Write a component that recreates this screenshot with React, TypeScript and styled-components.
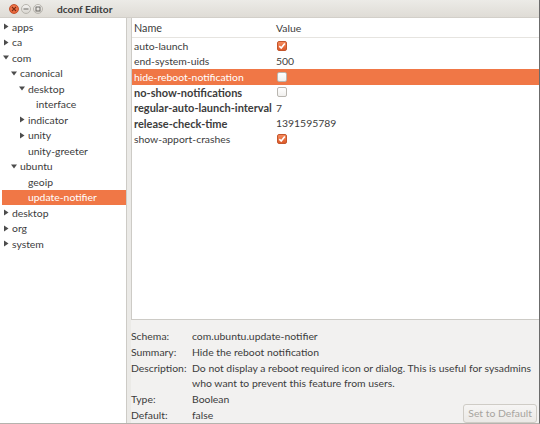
import styled, { createGlobalStyle } from "styled-components";

const GlobalStyle = createGlobalStyle`
  html, body {
    margin: 0;
    padding: 0;
    background: #f2f1f0;
  }
  body {
    font-family: Lato, "Liberation Sans", sans-serif;
    font-size: 10.4px;
    color: #3c3c3c;
  }
`;

interface TreeNode {
  name: string;
  level: number;
  arrow?: "open" | "closed";
  selected?: boolean;
}

const tree: TreeNode[] = [
  { name: "apps", level: 0, arrow: "closed" },
  { name: "ca", level: 0, arrow: "closed" },
  { name: "com", level: 0, arrow: "open" },
  { name: "canonical", level: 1, arrow: "open" },
  { name: "desktop", level: 2, arrow: "open" },
  { name: "interface", level: 3 },
  { name: "indicator", level: 2, arrow: "closed" },
  { name: "unity", level: 2, arrow: "closed" },
  { name: "unity-greeter", level: 2 },
  { name: "ubuntu", level: 1, arrow: "open" },
  { name: "geoip", level: 2 },
  { name: "update-notifier", level: 2, selected: true },
  { name: "desktop", level: 0, arrow: "closed" },
  { name: "org", level: 0, arrow: "closed" },
  { name: "system", level: 0, arrow: "closed" },
];

interface KeyRow {
  name: string;
  value: string | boolean;
  bold?: boolean;
  selected?: boolean;
}

const keys: KeyRow[] = [
  { name: "auto-launch", value: true },
  { name: "end-system-uids", value: "500" },
  { name: "hide-reboot-notification", value: false, selected: true },
  { name: "no-show-notifications", value: false, bold: true },
  { name: "regular-auto-launch-interval", value: "7", bold: true },
  { name: "release-check-time", value: "1391595789", bold: true },
  { name: "show-apport-crashes", value: true },
];

const Window = styled.div`
  width: 540px;
  height: 424px;
  display: flex;
  flex-direction: column;
  background: #f2f1f0;
  box-sizing: border-box;
  border-right: 1px solid #6b6b6b;
  border-bottom: 1px solid #b5b3ae;
  overflow: hidden;
`;

const TitleBar = styled.div`
  height: 18px;
  flex: none;
  display: flex;
  align-items: center;
  padding-left: 9px;
  gap: 2px;
  background: linear-gradient(#ecebe7, #dfdcd6);
  border-bottom: 1px solid #d2cfc9;
  box-sizing: border-box;
`;

const WinButton = styled.div<{ $close?: boolean }>`
  width: 10px;
  height: 10px;
  border-radius: 50%;
  display: flex;
  align-items: center;
  justify-content: center;
  box-sizing: border-box;
  background: ${(p) =>
    p.$close
      ? "radial-gradient(circle at 50% 40%, #f88a5e, #e2542a)"
      : "linear-gradient(#f4f3f1, #d9d6d0)"};
  border: 1px solid ${(p) => (p.$close ? "#c2512c" : "#b8b5ae")};
  svg {
    display: block;
  }
`;

const Title = styled.div`
  margin-left: 12px;
  font-weight: bold;
  font-size: 10.2px;
  color: #3c3c3c;
`;

const Body = styled.div`
  flex: 1;
  display: flex;
  min-height: 0;
`;

const TreePane = styled.div`
  width: 127px;
  flex: none;
  background: #fff;
  border-right: 1px solid #cdcbc6;
  box-sizing: border-box;
  padding-top: 1px;
`;

const TreeRow = styled.div<{ $level: number; $selected?: boolean }>`
  height: 15.5px;
  display: flex;
  align-items: center;
  padding-left: ${(p) => 1 + p.$level * 8}px;
  margin-left: 2px;
  background: ${(p) => (p.$selected ? "#f07746" : "transparent")};
  color: ${(p) => (p.$selected ? "#fff" : "#3c3c3c")};
  white-space: nowrap;
`;

const Arrow = styled.span`
  width: 7px;
  flex: none;
  display: flex;
  align-items: center;
  svg {
    display: block;
  }
`;

const NodeName = styled.span`
  margin-left: 2px;
`;

const Handle = styled.div`
  width: 4px;
  flex: none;
  background: #ebeae7;
`;

const RightSide = styled.div`
  flex: 1;
  display: flex;
  flex-direction: column;
  min-width: 0;
`;

const ListPane = styled.div`
  height: 302px;
  flex: none;
  background: #fff;
  border-left: 1px solid #cdcbc6;
  border-bottom: 1px solid #cdcbc6;
  box-sizing: border-box;
`;

const HeaderRow = styled.div`
  height: 20px;
  display: flex;
  align-items: center;
  border-bottom: 1px solid #e6e4e0;
  box-sizing: border-box;
  color: #3c3c3c;
  font-size: 10.8px;
`;

const Row = styled.div<{ $selected?: boolean; $bold?: boolean }>`
  height: 15.5px;
  display: flex;
  align-items: center;
  background: ${(p) => (p.$selected ? "#f07746" : "transparent")};
  color: ${(p) => (p.$selected ? "#fff" : "#3c3c3c")};
  font-weight: ${(p) => (p.$bold ? "bold" : "normal")};
  font-size: ${(p) => (p.$bold ? "11px" : "10.4px")};
  white-space: nowrap;
`;

const NameCell = styled.div`
  width: 142px;
  flex: none;
  padding-left: 2px;
`;

const ValueCell = styled.div`
  flex: 1;
  font-weight: normal;
  font-size: 10.4px;
  display: flex;
  align-items: center;
`;

const Check = styled.span<{ $on: boolean }>`
  width: 10px;
  height: 10px;
  border-radius: 2px;
  box-sizing: border-box;
  display: flex;
  align-items: center;
  justify-content: center;
  margin-left: 1px;
  border: 1px solid ${(p) => (p.$on ? "#c4562c" : "#b9b6b0")};
  background: ${(p) =>
    p.$on ? "linear-gradient(#f58a5c, #dd5a2a)" : "linear-gradient(#ffffff, #f1f0ee)"};
  svg {
    display: block;
  }
`;

const InfoArea = styled.div`
  flex: 1;
  display: grid;
  grid-template-columns: 61px 1fr;
  grid-auto-rows: min-content;
  padding: 9px 2px 0 0;
  color: #3c3c3c;
`;

const Label = styled.div`
  line-height: 15.8px;
`;

const Value = styled.div`
  line-height: 15.5px;
  padding-bottom: 0.3px;
`;

const DefaultCell = styled.div`
  display: flex;
  justify-content: space-between;
  align-items: flex-end;
  line-height: 15.8px;
`;

const DefaultButton = styled.button`
  font: inherit;
  font-size: 10.4px;
  color: #a7a49e;
  height: 19px;
  padding: 0 4px;
  margin-top: -4px;
  border: 1px solid #cfccc6;
  border-radius: 3px;
  background: linear-gradient(#f6f5f4, #ebe9e6);
`;

const TreeArrow = ({ open }: { open: boolean }) => (
  <svg width="6" height="7" viewBox="0 0 6 7">
    {open ? (
      <path d="M0 1.5 L6 1.5 L3 5.5 Z" fill="#4c4c4c" />
    ) : (
      <path d="M1 0.5 L5.5 3.5 L1 6.5 Z" fill="#4c4c4c" />
    )}
  </svg>
);

const CheckBox = ({ on }: { on: boolean }) => (
  <Check $on={on}>
    {on && (
      <svg width="8" height="8" viewBox="0 0 8 8">
        <path d="M1.3 4.2 L3.2 6 L6.8 1.6" stroke="#fff" strokeWidth="1.6" fill="none" />
      </svg>
    )}
  </Check>
);

export default function App() {
  return (
    <>
      <GlobalStyle />
      <Window>
        <TitleBar>
          <WinButton $close>
            <svg width="6" height="6" viewBox="0 0 6 6">
              <path d="M1 1 L5 5 M5 1 L1 5" stroke="#7a2a12" strokeWidth="1.1" />
            </svg>
          </WinButton>
          <WinButton>
            <svg width="6" height="6" viewBox="0 0 6 6">
              <path d="M0.5 3 L5.5 3" stroke="#6a6864" strokeWidth="1" />
            </svg>
          </WinButton>
          <WinButton>
            <svg width="6" height="6" viewBox="0 0 6 6">
              <rect x="1" y="1" width="4" height="4" stroke="#6a6864" strokeWidth="1" fill="none" />
            </svg>
          </WinButton>
          <Title>dconf Editor</Title>
        </TitleBar>
        <Body>
          <TreePane>
            {tree.map((n, i) => (
              <TreeRow key={i} $level={n.level} $selected={n.selected}>
                <Arrow>{n.arrow && <TreeArrow open={n.arrow === "open"} />}</Arrow>
                <NodeName>{n.name}</NodeName>
              </TreeRow>
            ))}
          </TreePane>
          <Handle />
          <RightSide>
            <ListPane>
              <HeaderRow>
                <NameCell>Name</NameCell>
                <ValueCell>Value</ValueCell>
              </HeaderRow>
              {keys.map((k) => (
                <Row key={k.name} $selected={k.selected} $bold={k.bold}>
                  <NameCell>{k.name}</NameCell>
                  <ValueCell>
                    {typeof k.value === "boolean" ? <CheckBox on={k.value} /> : k.value}
                  </ValueCell>
                </Row>
              ))}
            </ListPane>
            <InfoArea>
              <Label>Schema:</Label>
              <Value>com.ubuntu.update-notifier</Value>
              <Label>Summary:</Label>
              <Value>Hide the reboot notification</Value>
              <Label>Description:</Label>
              <Value>
                Do not display a reboot required icon or dialog. This is useful for sysadmins who
                want to prevent this feature from users.
              </Value>
              <Label>Type:</Label>
              <Value>Boolean</Value>
              <Label>Default:</Label>
              <DefaultCell>
                <span>false</span>
                <DefaultButton disabled>Set to Default</DefaultButton>
              </DefaultCell>
            </InfoArea>
          </RightSide>
        </Body>
      </Window>
    </>
  );
}
